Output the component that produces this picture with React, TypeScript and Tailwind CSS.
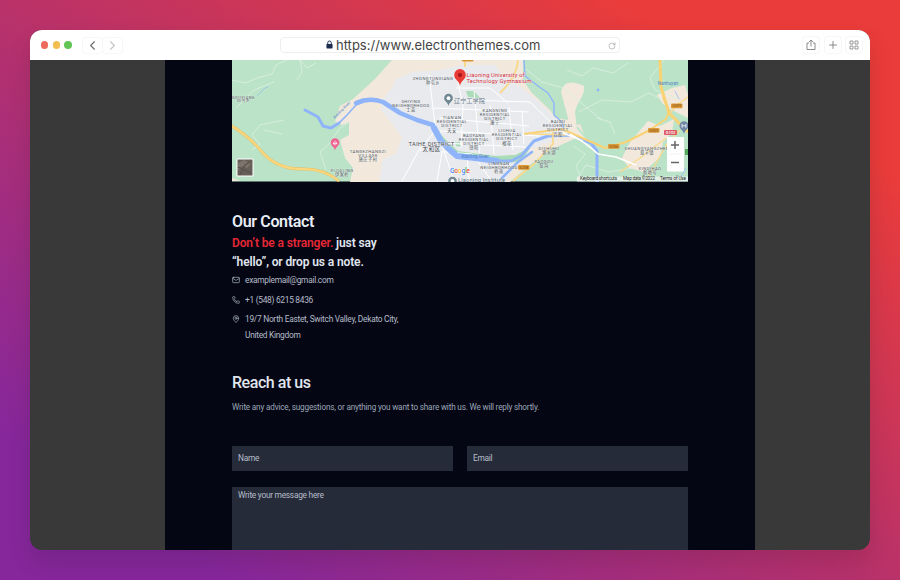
import type { ReactNode } from "react";
import { ChevronLeft, ChevronRight, Mail, MapPin, Phone, Plus, RotateCw } from "lucide-react";

type MapLabel = { x: number; y: number; lines: string[]; size?: number };

const PLACES: MapLabel[] = [
  { x: 11.5, y: 38.5, lines: ["GOUXIANG", "白沟乡"], size: 3.9 },
  { x: 201, y: 19.5, lines: ["ZHONGTUNXIANG", "种屯乡"] },
  { x: 179, y: 42.5, lines: ["SHIYING", "NEIGHBORHOOD", "士英"] },
  { x: 220, y: 59, lines: ["TIAN'AN", "RESIDENTIAL", "DISTRICT", "天安"] },
  { x: 263, y: 51.5, lines: ["KANGNING", "RESIDENTIAL", "DISTRICT", "康宁"] },
  { x: 242, y: 76.5, lines: ["BAOYANG", "RESIDENTIAL", "DISTRICT", "饶阳"] },
  { x: 275, y: 72, lines: ["LIUHUA", "RESIDENTIAL", "DISTRICT", "榴花"] },
  { x: 326, y: 63, lines: ["BAIGU", "RESIDENTIAL", "DISTRICT", "百股"] },
  { x: 136, y: 92.5, lines: ["TANGEZHANGZI", "VILLAGE", "唐庄子村"] },
  { x: 110, y: 112, lines: ["YIJIALING", "伊家岭"] },
  { x: 267, y: 105, lines: ["LINGNAN", "NEIGHBORHOOD", "岭南"] },
  { x: 317, y: 90, lines: ["DISHUHU", "滴水湖"] },
  { x: 312, y: 103, lines: ["YAOGOU", "窑沟"] },
  { x: 415, y: 90, lines: ["SHUANGYANGZHEN", "双羊镇"] },
  { x: 418, y: 109.5, lines: ["XINDIHAO", "新地号"] },
];

// short minor roads, drawn as thin light strokes
const LANES = [
  "M0 20L14 23L25 18L40 14L44 5L55 0",
  "M4 48L22 30L42 22",
  "M68 0L70 12L65 20",
  "M20 90L28 84L20 75L28 65L52 60",
  "M32 70L50 74",
  "M94 110L88 92L97 84L108 68L116 63",
  "M68 0L75 8L84 3",
  "M292 8L310 22L332 28L355 48L370 60",
  "M335 10L350 16L361 8L381 13L396 3",
  "M347 52L370 40L399 42L417 33L431 40",
  "M365 58L378 62L383 74",
  "M432 0L418 18L423 30L445 38",
  "M344 121L354 105L376 112L400 108",
  "M342 86L353 94L344 106L350 121",
];

const STREETS = [
  "M197 15L201 48L203 64L222 121",
  "M201 48L251 50L297 52",
  "M224 14L231 45L229 88",
  "M242 31L248 96",
  "M258 45L262 94",
  "M277 47L281 90",
  "M207 58L297 66",
  "M208 71L308 76",
  "M210 83L294 87",
  "M224 28L258 28L276 43",
  "M290 50L292 84",
  "M232 40L298 42L326 69",
  "M170 121L187 90L204 70",
  "M188 90L240 94L260 121",
  "M205 121L210 92",
  "M235 94L237 121",
];

const SHIELDS = [
  { x: 287, y: 105, text: "S208" },
  { x: 377, y: 84, text: "S206" },
  { x: 417, y: 68, text: "S309" },
  { x: 440, y: 43.5, text: "S309" },
];

function Place({ x, y, lines, size = 4.2 }: MapLabel) {
  return (
    <text
      textAnchor="middle"
      fontSize={size}
      letterSpacing=".45"
      fill="#4d545b"
      stroke="#f5f6f6"
      strokeOpacity=".6"
      strokeWidth=".5"
      paintOrder="stroke"
    >
      {lines.map((line, i) => (
        <tspan key={line} x={x} y={y + i * size}>
          {line}
        </tspan>
      ))}
    </text>
  );
}

function Pin({ x, y, fill, scale = 1, children }: { x: number; y: number; fill: string; scale?: number; children?: ReactNode }) {
  return (
    <g transform={`translate(${x} ${y}) scale(${scale})`}>
      <path d="M0 0C-.8-5-5.8-6-5.8-10.6a5.8 5.8 0 0 1 11.6 0C5.8-6 .8-5 0 0Z" fill={fill} />
      {children}
    </g>
  );
}

function LocationMap() {
  return (
    <svg
      viewBox="0 0 456 121.5"
      className="block h-[121.5px] w-[456px] font-[Roboto,'Noto_Sans_CJK_SC',sans-serif]"
      role="img"
      aria-label="Map of Taihe District"
    >
      <rect width="456" height="121.5" fill="#bbe3c8" />
      <path
        d="M160 0L143 19L121 39L108 46L103 62L110 65L117 62V75L108 80L113 98L121 108L118 122H278L300 103L316 91L342 79L338 67L348 64L352 74L341 61L324 58L318 50L300 33L291 20L291 0Z"
        fill="#f2e9dc"
      />
      <path
        d="M160 28L164 19L180 12L208 10L230 5L263 5L270 14L290 28L306 41L321 56L331 66L324 80L302 88L288 100L273 122H147L151 99L164 94L170 77L161 65L149 50L151 39Z"
        fill="#e8eaee"
      />
      <path d="M329 32C332 20 341 21 352 26C354 34 345 42 343 52L345 69L355 80L333 75L336 58Z" fill="#f2e9dc" />
      <path d="M390 98L398 82L416 61L428 66L442 59L440 73L431 82L428 97L412 112L397 108Z" fill="#f2e9dc" />
      <path d="M440 28L453 25L456 35V58L438 49L430 43L425 35Z" fill="#f2e9dc" />
      <path d="M0 118L8 121H0Z" fill="#f2e9dc" />
      <path d="M234 31L242 31L248 38L236 37ZM204 69L213 79L226 91L263 96L283 95L298 88L289 102L265 103L222 96ZM223 82L228 82L229 87L224 86Z" fill="#a9dcb7" />

      {LANES.map((d) => (
        <path key={d} d={d} fill="none" stroke="#d9eee0" strokeWidth=".9" />
      ))}
      {STREETS.map((d) => (
        <path key={d} d={d} fill="none" stroke="#fff" strokeWidth="1" />
      ))}

      {/* water */}
      <g fill="none" stroke="#8fb4fa" strokeLinejoin="round" strokeLinecap="round">
        <path d="M73 50L86 57L91 66L99 68L107 63" strokeWidth="3" />
        <path d="M106 64L115 55L124 45L137 40" strokeWidth="1.6" />
        <path d="M124 43Q137 37 151 42L168 53L185 60L201 65" strokeWidth="4.5" />
        <path d="M202 68L209 81L218 90L225 96L243 98L265 101" strokeWidth="6" />
        <path d="M265 101L279 101L289 96L302 81L316 76L339 75L359 83L365 91V121" strokeWidth="3" />
        <path d="M300 92L286 102L270 118" strokeWidth="2.5" />
        <path d="M292 0L293 16L306 26L316 33L322 43V55L330 62L332 70" strokeWidth="1.4" />
        <path d="M25 36L33 28L36 27" strokeWidth=".6" />
        <path d="M447 39L443 31M454 108L448 118" strokeWidth=".7" />
      </g>
      <circle cx="366" cy="30" r="1.4" fill="#8fb4fa" />

      {/* highways */}
      <g fill="none" strokeLinejoin="round">
        <path d="M0 66Q19 78 30 92Q45 109 69 109Q91 108 107 121" stroke="#e9bd59" strokeWidth="2.8" />
        <path d="M0 66Q19 78 30 92Q45 109 69 109Q91 108 107 121" stroke="#fbd77f" strokeWidth="2" />
        <path d="M428 0L429 27L437 53L446 62L456 72" stroke="#f9d274" strokeWidth="3" />
        <path d="M431 37L437 51L434 59L416 71L394 82L373 88L348 77L330 69L292 74" stroke="#f9d274" strokeWidth="2" />
        <path d="M438 53L446 44L456 37M414 121L436 82L448 70M388 112L408 98L434 78" stroke="#f9d98b" strokeWidth="1.4" />
        <path d="M233 0V7M286 0Q285 17 268 33" stroke="#f8d98c" strokeWidth="2" />
        <path d="M281 121L302 104L321 84V72M300 74L334 75" stroke="#f8d98c" strokeWidth="1.7" />
        <path d="M338 74Q353 82 366 94L384 97L404 105M331 73L351 81" stroke="#fff" strokeWidth="1.5" />
      </g>

      <rect x="230" y="-2" width="11.5" height="3.5" rx="1" fill="#d79536" />
      {SHIELDS.map((s) => (
        <g key={`${s.x}-${s.y}`}>
          <rect x={s.x - 1} y={s.y} width="11.5" height="4.8" rx="1" fill="#dd9a38" />
          <text x={s.x + 4.7} y={s.y + 3.9} fontSize="4" textAnchor="middle" fill="#7f4d13">
            {s.text}
          </text>
        </g>
      ))}
      <rect x="432" y="70" width="13" height="5" rx="1" fill="#dc5965" />
      <text x="438.5" y="74" fontSize="4" fontWeight="500" textAnchor="middle" fill="#fff">
        G102
      </text>

      {PLACES.map((p) => (
        <Place key={p.lines[0]} {...p} />
      ))}
      <text textAnchor="middle" fontSize="5.8" letterSpacing=".3" fill="#454b51" stroke="#f5f6f6" strokeWidth=".5" paintOrder="stroke">
        <tspan x="199.5" y="85.5">TAIHE DISTRICT</tspan>
        <tspan x="199.5" y="91">太和区</tspan>
      </text>
      <text x="243" y="98" fontSize="4.6" textAnchor="middle" fill="#4c82c6">Xiaoling River</text>
      <text x="110.500" y="51" fontSize="3.800" textAnchor="middle" fill="#4c82c6" transform="rotate(-45 110.5 51)">Xiaoling River</text>
      <text x="436" y="25" fontSize="4.6" textAnchor="middle" fill="#4c82c6">Nanhuyan</text>

      <Pin x={103} y={90.5} fill="#f06292" scale={0.75}>
        <path d="M-3-9h6M-2-9v-2M2-9v-2M0-13v6" stroke="#fff" />
      </Pin>
      <Pin x={216.5} y={46} fill="#6f8792" scale={0.75}>
        <circle cy="-10.5" r="2.5" fill="#fff" />
      </Pin>
      <Pin x={228} y={25.5} fill="#ea3a35">
        <circle cy="-10.4" r="2.1" fill="#a6191a" />
      </Pin>
      <Pin x={220.5} y={129} fill="#6f8792" scale={0.75}>
        <circle cy="-11" r="2.5" fill="#fff" />
      </Pin>
      <Pin x={452} y={74} fill="#7088a5" scale={0.78}>
        <path d="M-2.5-13v5M2.5-13v5M-2.5-10.5h5" stroke="#fff" fill="none" />
      </Pin>

      <text fontSize="5.8" fill="#cf2935" stroke="#f4f3f5" strokeWidth=".5" paintOrder="stroke">
        <tspan x="234.5" y="17" textLength="58">Liaoning University of</tspan>
        <tspan x="234.5" y="23.3" textLength="65">Technology Gymnasium</tspan>
      </text>
      <text x="222" y="43" fontSize="6.2" fill="#72808d">辽宁工学院</text>
      <text x="226" y="122.2" fontSize="5.6" fill="#4f6b76" textLength="47">Liaoning Institute</text>

      <text x="218" y="112.5" fontSize="6.8" fontWeight="500" stroke="#fff" strokeWidth=".7" paintOrder="stroke" textLength="20">
        <tspan fill="#4285f4">G</tspan>
        <tspan fill="#ea4335">o</tspan>
        <tspan fill="#fbbc05">o</tspan>
        <tspan fill="#4285f4">g</tspan>
        <tspan fill="#34a853">l</tspan>
        <tspan fill="#ea4335">e</tspan>
      </text>

      {/* satellite view toggle */}
      <rect x="4.5" y="98.5" width="17" height="18" rx="1" fill="#fff" />
      <rect x="5.5" y="99.5" width="15" height="16" fill="#665f58" />
      <path d="M6 103L12 100L19 104L15 108L10 106L6 111Z" fill="#7e746b" />
      <path d="M8 115L13 105L18 102M6 107L19 113" stroke="#57534d" strokeWidth="1.2" fill="none" />

      <rect x="453" y="89" width="3" height="6" fill="#53a85c" />
      <rect x="435" y="77" width="17" height="34.5" rx="1" fill="#fff" />
      <path d="M439 85H447M443 81V89M439 102.5H447" stroke="#666" strokeWidth="1.5" />
      <path d="M437.5 94H449.5" stroke="#e6e6e6" strokeWidth=".5" />

      <rect x="345" y="116.5" width="111" height="5" fill="#edf2ee" fillOpacity=".8" />
      <g fontSize="4.6" fill="#25292b">
        <text x="348" y="120.2" textLength="37">Keyboard shortcuts</text>
        <text x="391" y="120.2" textLength="32">Map data ©2022</text>
        <text x="428" y="120.2" textLength="26">Terms of Use</text>
      </g>
    </svg>
  );
}

function ToolButton({ children }: { children: ReactNode }) {
  return (
    <button type="button" className="flex h-4 w-4 items-center justify-center rounded-[3px] text-[#808080] ring-1 ring-[#f7f7f7]">
      {children}
    </button>
  );
}

function BrowserBar() {
  return (
    <header className="grid h-[30px] shrink-0 grid-cols-[250px_340px_250px] items-center bg-white">
      <div className="flex items-center pl-[11px]">
        <div className="flex gap-[4.5px]">
          <span className="size-[7.2px] rounded-full bg-[#ed6a5e]" />
          <span className="size-[7.2px] rounded-full bg-[#f3bd4e]" />
          <span className="size-[7.2px] rounded-full bg-[#61c455]" />
        </div>
        <div className="ml-[11px] flex gap-[1px]">
          <button type="button" aria-label="Back" className="flex h-[15px] w-[19px] items-center justify-center rounded-[3px] text-[#6e6e6e] ring-1 ring-[#f7f7f7]">
            <ChevronLeft size={15} strokeWidth={1.8} />
          </button>
          <button type="button" aria-label="Forward" className="flex h-[15px] w-[19px] items-center justify-center rounded-[3px] text-[#c4c4c4] ring-1 ring-[#f7f7f7]">
            <ChevronRight size={15} strokeWidth={1.8} />
          </button>
        </div>
      </div>

      <div className="grid h-4 grid-cols-[52px_1fr_11px] items-center rounded-[4px] border border-[#eeeeee]">
        <svg viewBox="0 0 8 10" className="mb-[3px] ml-auto h-[9px] w-[7px]">
          <path d="M2 5V3a2 2 0 0 1 4 0v2" fill="none" stroke="#1c2d50" strokeWidth="1.1" />
          <rect x=".5" y="4.3" width="7" height="5.2" rx=".8" fill="#1c2d50" />
        </svg>
        <span className="h-4 w-fit pl-[3px] font-[Inter] text-[13px] leading-[15px] whitespace-nowrap text-[#444]">
          https://www.electronthemes.com
        </span>
        <RotateCw size={8} strokeWidth={1.8} className="text-[#999]" />
      </div>

      <div className="flex items-center justify-end gap-[5.5px] pr-[8px]">
        <ToolButton>
          <svg viewBox="0 0 12 12" className="size-3" fill="none" stroke="currentColor" strokeWidth=".9">
            <path d="M4 4H2v6.5h8V4H8M6 7.5V1M3.9 3.1L6 1l2.1 2.1" />
          </svg>
        </ToolButton>
        <ToolButton>
          <Plus size={12} strokeWidth={1.8} />
        </ToolButton>
        <ToolButton>
          <svg viewBox="0 0 10 10" className="size-[10px]" fill="none" stroke="currentColor" strokeWidth=".8">
            <path d="M1 1h3v3H1zM6 1h3v3H6zM1 6h3v3H1zM6 6h3v3H6z" />
          </svg>
        </ToolButton>
      </div>
    </header>
  );
}

function ContactDetails() {
  return (
    <section className="mt-[29px]">
      <h1 className="text-[16px] leading-[22px] font-semibold tracking-[-0.35px] text-[#e9edf4]">Our Contact</h1>
      <h2 className="mt-[1px] text-[12px] leading-[19.5px] font-semibold tracking-[-0.12px] text-[#e1e6ef]">
        <span className="text-[#e62834]">Don’t be a stranger.</span> just say
        <br />
        “hello”, or drop us a note.
      </h2>
      <address className="-mt-px text-[8.4px] leading-4 tracking-[-0.29px] text-[#b5bcc8] not-italic">
        <p className="flex items-center gap-[5px]">
          <Mail size={8} strokeWidth={2} />
          examplemail@gmail.com
        </p>
        <p className="mt-[4px] flex items-center gap-[5px]">
          <Phone size={8} strokeWidth={2} />
          +1 (548) 6215 8436
        </p>
        <p className="mt-[3px] flex items-start gap-[5px]">
          <MapPin size={8} strokeWidth={2} className="mt-[4px]" />
          <span>
            19/7 North Eastet, Switch Valley, Dekato City,
            <br />
            United Kingdom
          </span>
        </p>
      </address>
    </section>
  );
}

function ContactForm() {
  const field =
    "block w-full resize-none bg-[#262b3a] px-[6px] text-[8.4px] tracking-[-0.28px] text-[#b5bcc8] outline-none placeholder:text-[#b5bcc8] placeholder:opacity-100";

  return (
    <form className="mt-[29.5px]">
      <h2 className="text-[16px] leading-[22px] font-medium tracking-[-0.45px] text-[#e1e6ee]">Reach at us</h2>
      <p className="mt-[4.5px] text-[8.2px] leading-4 tracking-[-0.19px] text-[#9da7b6]">
        Write any advice, suggestions, or anything you want to share with us. We will reply shortly.
      </p>
      <div className="mt-[31px] grid grid-cols-2 gap-[14px]">
        <input aria-label="Name" placeholder="Name" className={`${field} h-[25px]`} />
        <input aria-label="Email" placeholder="Email" className={`${field} h-[25px]`} />
      </div>
      <textarea aria-label="Message" placeholder="Write your message here" className={`${field} mt-4 h-[90px] pt-[2px]`} />
    </form>
  );
}

export default function App() {
  return (
    <div className="h-[580px] w-[900px] overflow-hidden bg-[linear-gradient(to_top_right,#86279b_13%,#ea3c3a_85%)] p-[30px]">
      <div className="flex h-[520px] w-[840px] flex-col overflow-hidden rounded-[12px] bg-[#393939] shadow-[0_12px_24px_rgba(0,0,0,0.12)]">
        <BrowserBar />
        <main className="ml-[135px] h-[490px] w-[590px] overflow-hidden bg-[#040614] pl-[67px] font-[Roboto,sans-serif]">
          <div className="w-[456px]">
            <LocationMap />
            <ContactDetails />
            <ContactForm />
          </div>
        </main>
      </div>
    </div>
  );
}
